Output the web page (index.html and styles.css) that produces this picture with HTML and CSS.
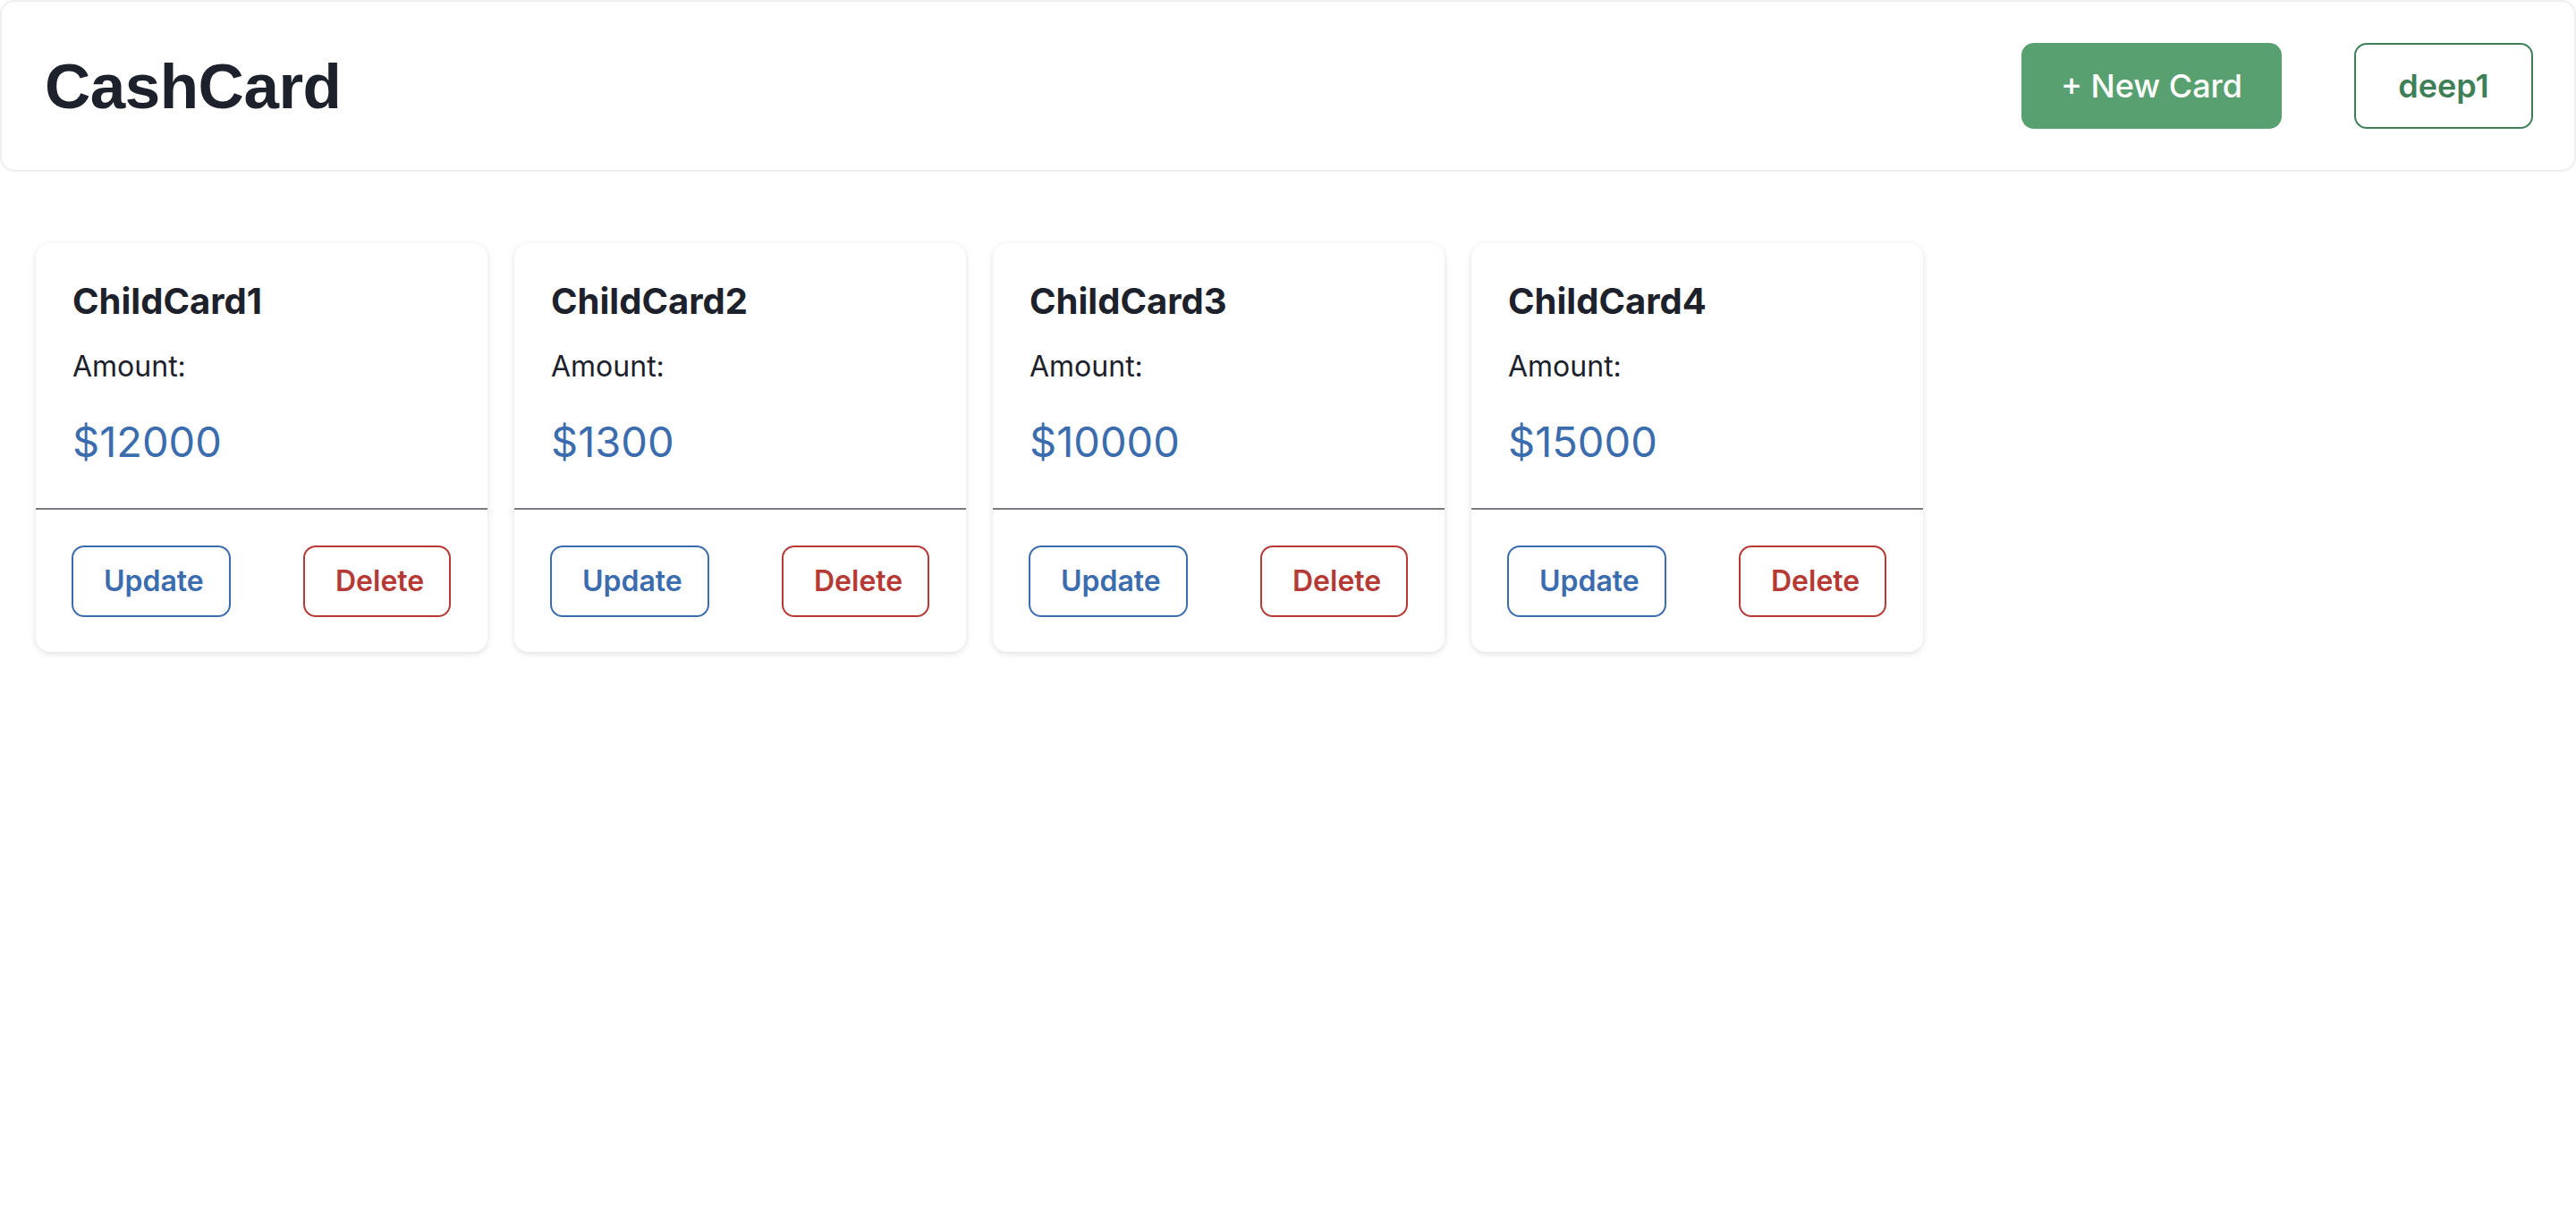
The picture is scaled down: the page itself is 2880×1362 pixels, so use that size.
FILE: index.html
```html
<!DOCTYPE html>
<html lang="en">
<head>
<meta charset="utf-8">
<title>CashCard</title>
<link rel="stylesheet" href="styles.css">
</head>
<body>
<header class="topbar">
  <h1 class="brand">CashCard</h1>
  <div class="actions">
    <button class="btn btn-new">+ New Card</button>
    <button class="btn btn-user">deep1</button>
  </div>
</header>
<main class="cards">
  <article class="card">
    <div class="card-body">
      <h2 class="card-title">ChildCard1</h2>
      <p class="card-label">Amount:</p>
      <p class="card-value">$12000</p>
    </div>
    <div class="card-footer">
      <button class="btn-sm btn-update">Update</button>
      <button class="btn-sm btn-delete">Delete</button>
    </div>
  </article>
  <article class="card">
    <div class="card-body">
      <h2 class="card-title">ChildCard2</h2>
      <p class="card-label">Amount:</p>
      <p class="card-value">$1300</p>
    </div>
    <div class="card-footer">
      <button class="btn-sm btn-update">Update</button>
      <button class="btn-sm btn-delete">Delete</button>
    </div>
  </article>
  <article class="card">
    <div class="card-body">
      <h2 class="card-title">ChildCard3</h2>
      <p class="card-label">Amount:</p>
      <p class="card-value">$10000</p>
    </div>
    <div class="card-footer">
      <button class="btn-sm btn-update">Update</button>
      <button class="btn-sm btn-delete">Delete</button>
    </div>
  </article>
  <article class="card">
    <div class="card-body">
      <h2 class="card-title">ChildCard4</h2>
      <p class="card-label">Amount:</p>
      <p class="card-value">$15000</p>
    </div>
    <div class="card-footer">
      <button class="btn-sm btn-update">Update</button>
      <button class="btn-sm btn-delete">Delete</button>
    </div>
  </article>
</main>
</body>
</html>
```
FILE: styles.css
```css
* { box-sizing: border-box; }

html, body {
  margin: 0;
  padding: 0;
  background: #ffffff;
  font-family: Inter, "Noto Sans", sans-serif;
  color: #1d212b;
}

.topbar {
  height: 192px;
  display: flex;
  align-items: center;
  justify-content: space-between;
  padding: 0 46px 0 48px;
  border: 2px solid #eeeeee;
  border-radius: 16px;
  background: #fff;
}

.brand {
  margin: 0;
  font-family: "Liberation Sans", Arial, sans-serif;
  font-weight: 700;
  font-size: 71px;
  letter-spacing: -0.5px;
  color: #1d212b;
}

.actions {
  display: flex;
  align-items: center;
  gap: 81px;
}

.btn {
  height: 96px;
  font-family: Inter, sans-serif;
  font-size: 36px;
  font-weight: 500;
  border-radius: 14px;
  cursor: pointer;
  line-height: 1;
}

.btn-new {
  width: 291px;
  background: #59a070;
  border: none;
  color: #ffffff;
}

.btn-user {
  width: 200px;
  background: #ffffff;
  border: 2px solid #3f7f58;
  color: #3f7f58;
  font-weight: 600;
}

.cards {
  display: flex;
  flex-wrap: wrap;
  gap: 30px;
  padding: 80px 40px;
}

.card {
  width: 505px;
  background: #fff;
  border-radius: 16px;
  box-shadow: 0 2px 7px rgba(0, 0, 0, 0.13);
  display: flex;
  flex-direction: column;
}

.card-body {
  padding: 41px 41px 46px;
}

.card-title {
  margin: 0;
  font-size: 40px;
  line-height: 48px;
  font-weight: 700;
  color: #1d212b;
}

.card-label {
  margin: 29px 0 0;
  font-size: 32px;
  line-height: 40px;
  font-weight: 400;
  color: #1d212b;
}

.card-value {
  margin: 36px 0 0;
  font-size: 47px;
  line-height: 56px;
  font-weight: 400;
  color: #3b6cad;
}

.card-footer {
  border-top: 2px solid #7a7b7f;
  padding: 40px 41px 39px 40px;
  display: flex;
  justify-content: space-between;
  align-items: center;
}

.btn-sm {
  height: 80px;
  padding: 0 34px;
  background: #fff;
  font-family: Inter, sans-serif;
  font-size: 32px;
  font-weight: 600;
  border-radius: 14px;
  cursor: pointer;
  line-height: 1;
}

.btn-update {
  width: 178px;
  border: 2px solid #3b6cad;
  color: #3b6cad;
}

.btn-delete {
  width: 165px;
  border: 2px solid #b53a35;
  color: #b53a35;
}
```
